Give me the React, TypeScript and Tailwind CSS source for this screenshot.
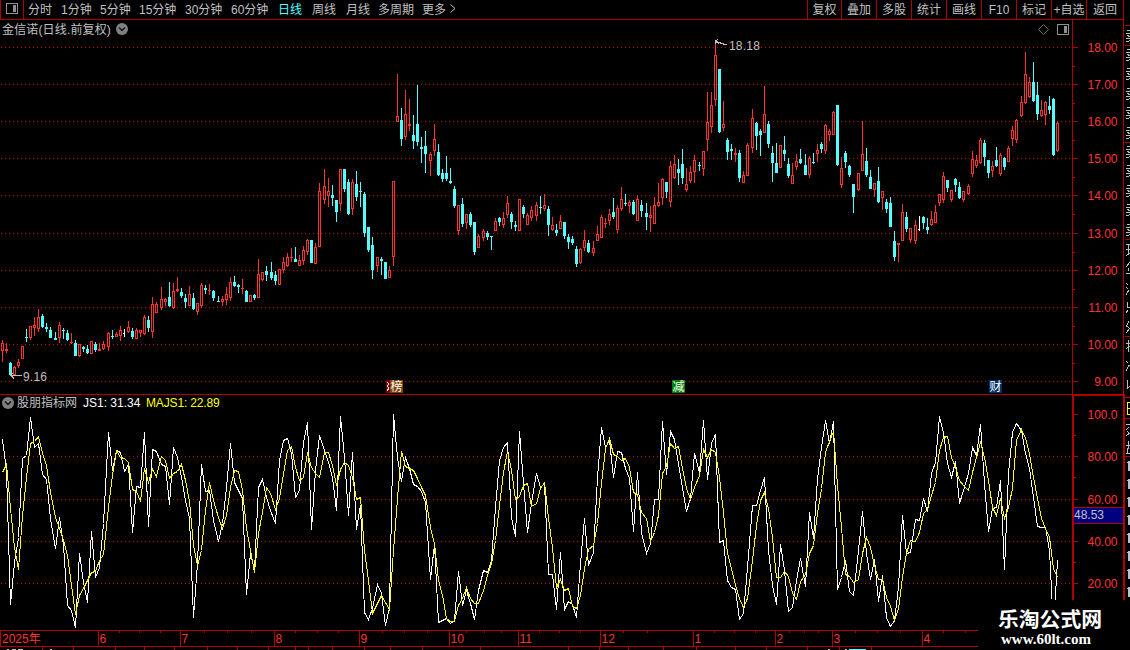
import React from "react";
import clsx from "clsx";

type Bar = [number, number, number, number, number, string];

const UP = "#ff3232";
const DOWN = "#54ffff";
const FLAT = "#ffffff";
const LINE = "#b00000";

// x high low bodyTop bodyBottom kind (r = up, c = down, w = flat)
const BARS_RAW = `
2 340 362 343 351 r;6 343 353 349 351 r;10 362 376 363 375 c;14 366 376 367 375 r;18 359 368 362 366 r;22 346 359 346 359 r;
26 329 342 337 338 c;30 326 340 326 338 r;34 317 336 325 328 r;38 309 332 317 329 r;42 314 328 316 327 c;46 323 332 327 329 c;
50 327 338 330 338 c;55 332 340 338 340 c;59 322 343 325 338 r;63 328 339 330 331 c;67 330 341 333 340 c;71 333 344 342 343 r;
75 340 356 343 356 c;79 344 357 344 356 r;83 346 352 347 349 c;87 345 354 349 353 c;91 341 354 341 354 r;95 342 352 344 350 c;
99 343 351 349 351 r;103 341 350 344 349 r;108 332 351 333 347 r;112 330 339 336 337 c;116 332 337 334 337 r;120 326 341 330 336 r;
124 329 337 333 334 w;128 321 333 327 332 r;132 328 339 331 337 c;136 328 339 330 339 r;140 330 337 330 333 r;144 315 335 317 334 r;
148 316 332 320 328 c;152 297 338 304 332 r;156 302 313 304 313 r;161 287 310 299 308 r;165 298 306 299 302 r;169 282 307 297 306 c;
173 283 309 291 308 r;177 277 292 289 291 r;181 288 298 292 296 c;185 294 308 298 302 c;189 286 306 294 306 r;193 293 310 298 309 c;
197 303 315 303 312 r;201 283 308 285 306 r;205 285 294 288 290 c;209 284 295 290 291 r;213 290 301 291 298 c;218 296 302 301 302 c;
222 296 306 299 302 r;226 287 305 294 300 r;230 277 301 282 298 r;234 276 287 282 286 c;238 284 293 285 287 c;242 279 294 288 289 r;
246 290 302 291 302 c;250 295 302 295 302 r;254 294 300 295 298 c;258 259 298 274 298 r;262 272 281 272 280 r;266 266 281 271 275 c;
271 262 280 272 278 c;275 271 285 275 281 c;279 269 285 269 285 r;283 257 273 262 270 r;287 253 267 257 266 r;291 248 262 257 258 r;
295 247 262 259 262 c;299 255 266 260 266 r;303 246 265 250 261 r;307 239 255 240 252 r;311 240 263 240 263 c;315 243 264 247 264 r;
319 183 247 191 247 r;324 169 204 186 200 r;328 178 207 191 196 r;332 185 206 195 198 c;336 200 222 200 212 c;340 169 211 169 204 r;
344 169 192 169 189 c;348 179 215 182 214 c;352 179 215 182 209 r;356 171 201 184 197 c;360 182 207 191 192 c;364 192 237 194 233 c;
368 227 252 227 250 c;372 237 279 245 270 c;377 257 272 257 266 r;381 257 275 259 261 c;385 262 279 262 279 c;389 266 278 270 278 r;
393 181 266 181 257 r;397 74 122 116 122 r;401 108 146 120 139 c;405 90 140 114 137 r;409 99 131 124 126 r;413 115 149 135 141 c;
417 85 146 124 142 c;421 137 163 147 149 c;425 131 173 146 154 c;430 152 176 154 161 r;434 124 156 139 151 r;438 144 176 152 175 c;
442 169 182 173 179 c;446 156 181 173 179 c;450 168 184 181 183 c;454 186 208 189 206 c;458 205 235 205 231 r;462 198 227 204 224 c;
466 214 229 214 223 r;470 212 227 214 225 c;474 222 255 222 252 c;478 234 248 236 248 r;483 229 241 231 238 r;487 231 240 233 237 c;
491 236 250 236 237 c;495 218 231 221 231 r;499 217 226 218 222 c;503 212 228 218 225 r;507 196 218 203 215 r;511 212 229 214 222 c;
515 221 231 225 227 c;519 199 231 199 231 r;523 205 218 207 214 c;527 213 225 215 225 r;531 206 221 210 218 r;536 202 221 205 216 r;
540 196 214 207 208 c;544 194 211 205 209 r;548 206 236 209 225 c;552 217 231 225 230 r;556 224 236 230 233 c;560 215 229 221 229 r;
564 222 239 222 236 c;568 234 249 237 242 c;572 236 245 239 243 c;576 246 267 249 264 c;580 248 264 249 263 r;584 230 251 240 248 r;
588 240 253 243 252 c;593 241 256 248 253 r;597 226 241 234 241 r;601 215 238 217 238 r;605 218 228 223 224 r;609 209 225 214 221 r;
613 198 219 212 217 c;617 205 233 208 230 r;621 187 211 199 209 r;625 194 206 203 204 c;629 200 213 202 206 r;633 200 215 202 214 c;
637 195 221 199 221 r;641 200 217 205 211 c;646 203 230 213 217 c;650 206 232 215 218 r;654 197 224 205 224 r;658 183 207 202 206 r;
662 178 205 179 198 r;666 182 198 182 192 c;670 161 207 166 202 r;674 155 179 164 178 r;678 159 185 169 173 c;682 149 184 164 178 c;
686 168 192 184 190 r;690 166 183 172 181 r;694 155 183 160 172 r;699 162 171 165 166 c;703 151 176 151 169 r;707 92 151 122 140 r;
711 92 133 105 127 r;715 40 106 55 100 r;719 69 133 69 132 c;723 101 131 124 128 r;727 138 160 140 152 c;731 144 160 149 151 c;
735 148 162 153 155 r;739 150 182 153 178 c;743 171 183 175 183 r;747 143 176 145 176 r;752 109 153 118 148 r;756 122 150 123 136 c;
760 129 156 131 135 c;764 86 133 114 133 r;768 121 148 124 144 c;772 146 182 153 163 c;776 143 173 163 173 c;780 145 168 145 168 r;
784 136 161 150 154 c;788 158 178 164 176 c;792 163 184 175 184 r;796 154 170 161 167 r;800 149 164 159 163 c;805 154 175 165 175 c;
809 156 178 158 175 r;813 153 164 162 163 c;817 144 162 150 154 r;821 142 153 144 149 c;825 124 154 125 151 r;829 129 141 131 135 r;
833 111 135 112 135 r;837 105 166 105 165 c;841 157 188 168 185 r;845 151 168 153 162 c;849 165 177 166 175 c;853 184 213 184 197 c;
858 173 191 173 190 r;862 121 171 154 171 r;866 148 177 161 175 c;870 170 189 177 189 c;874 183 197 183 190 r;878 167 203 181 202 c;
882 191 210 191 198 r;886 199 213 202 209 c;890 197 227 203 227 c;894 231 261 241 257 c;898 243 262 243 245 r;902 204 241 212 241 r;
906 212 232 217 229 c;910 228 243 228 240 r;915 220 244 225 241 r;919 216 231 229 230 w;923 216 229 217 223 c;927 218 234 227 230 c;
931 211 226 219 225 r;935 205 223 212 223 r;939 194 206 194 203 r;943 172 203 176 200 r;947 180 192 180 188 c;951 190 202 190 200 r;
955 178 192 179 185 c;959 182 199 187 198 c;963 191 202 191 200 r;968 184 195 186 194 r;972 151 177 159 174 r;976 155 168 160 166 r;
980 138 164 140 163 r;984 140 166 143 157 c;988 160 178 160 173 c;992 161 177 166 171 r;996 147 167 160 166 c;1000 153 176 155 174 r;
1004 157 170 158 167 c;1008 146 162 148 162 r;1012 126 146 130 139 r;1016 119 143 120 140 r;1021 96 117 102 116 r;1025 52 104 74 103 r;
1029 77 98 82 97 r;1033 62 102 82 101 c;1037 82 120 95 114 c;1041 100 117 110 116 r;1045 101 125 102 115 r;1049 96 114 106 110 c;
1053 98 156 99 155 c;1057 121 152 123 151 r`;

const BARS: Bar[] = BARS_RAW.trim()
  .split(";")
  .map((row) => {
    const p = row.trim().split(" ");
    return [+p[0], +p[1], +p[2], +p[3], +p[4], p[5]];
  });

const JS1 =
  "2,439 6,470 10,604 14,562 18,537 22,458 26,455 30,417 34,447 38,443 42,474 46,479 50,518 55,548 59,517 63,545 67,605 71,610 75,627 79,553 83,582 87,602 91,531 95,577 99,567 103,523 108,432 112,470 116,450 120,452 124,471 128,464 132,532 136,486 140,487 144,432 148,526 152,449 156,451 161,464 165,466 169,504 173,447 177,457 181,477 185,500 189,518 193,617 197,563 201,464 205,491 209,490 213,520 218,541 222,523 226,487 230,443 234,482 238,490 242,498 246,594 250,553 254,570 258,487 262,479 266,497 270,510 275,523 279,460 283,440 287,438 " +
  "291,453 295,497 299,490 303,442 307,422 311,529 315,470 319,435 324,450 328,462 332,477 336,510 340,416 344,457 348,515 352,452 356,529 360,505 364,612 368,619 372,608 377,584 381,593 385,625 389,607 393,414 397,457 401,481 405,457 409,468 413,484 417,486 421,491 425,502 430,579 434,544 438,622 442,620 446,618 450,623 454,620 458,571 462,605 466,590 470,603 474,619 478,590 483,570 487,572 491,560 495,507 499,460 503,447 507,442 511,517 515,536 519,431 523,483 527,532 531,503 536,473 540,487 544,483 548,574 552,574 556,609 " +
  "560,552 564,609 568,601 572,604 576,617 580,563 584,518 588,565 593,552 597,477 601,427 605,447 609,440 613,477 617,451 621,452 625,468 629,478 633,531 637,472 641,532 646,553 650,543 654,499 658,499 662,421 666,474 670,431 674,439 678,463 682,487 686,511 690,498 694,453 699,472 703,420 707,479 711,443 715,434 719,542 723,540 727,580 731,587 735,589 739,619 743,613 747,567 752,505 756,505 760,490 764,477 768,550 772,585 776,604 780,544 784,570 788,611 792,607 796,580 800,558 805,586 809,512 813,538 817,478 821,447 825,420 " +
  "829,443 833,421 837,589 841,577 845,560 849,591 853,595 858,550 862,511 866,553 870,579 874,559 878,601 882,575 886,617 890,626 894,620 898,587 902,515 906,553 910,552 915,519 919,520 923,498 927,511 931,473 935,462 939,416 943,432 947,463 951,477 955,461 959,503 963,490 968,473 972,447 976,455 980,424 984,483 988,531 992,508 996,507 1000,480 1004,569 1008,473 1012,432 1016,423 1021,430 1025,453 1029,468 1033,497 1037,526 1041,527 1045,527 1049,550 1053,628 1057,560";

const MAJS1 =
  "2,472 6,464 10,508 14,547 18,569 22,515 26,477 30,443 34,441 38,436 42,453 46,465 50,492 55,517 59,528 63,540 67,555 71,585 75,614 79,595 83,588 87,580 91,572 95,571 99,560 103,554 108,507 112,475 116,450 120,457 124,458 128,462 132,489 136,491 140,501 144,468 148,482 152,469 156,476 161,456 165,460 169,478 173,473 177,471 181,464 185,480 189,501 193,545 197,565 201,550 205,510 209,482 213,500 218,517 222,528 226,515 230,487 234,470 238,471 242,490 246,528 250,550 254,572 258,533 262,512 266,487 270,493 275,509 279,498 283,473 287,450 " +
  "291,446 295,467 299,480 303,477 307,452 311,467 315,473 319,477 324,452 328,452 332,465 336,485 340,469 344,462 348,465 352,477 356,499 360,497 364,550 368,580 372,613 377,603 381,595 385,602 389,609 393,550 397,498 401,451 405,466 409,468 413,470 417,478 421,487 425,495 430,527 434,543 438,580 442,595 446,618 450,621 454,621 458,605 462,598 466,587 470,598 474,603 478,603 483,590 487,575 491,563 495,540 499,505 503,472 507,451 511,470 515,499 519,496 523,485 527,483 531,506 536,503 540,488 544,482 548,518 552,547 556,587 " +
  "560,579 564,590 568,588 572,606 576,608 580,595 584,568 588,549 593,545 597,523 601,483 605,448 609,438 613,454 617,456 621,460 625,458 629,467 633,492 637,494 641,512 646,518 650,541 654,532 658,515 662,473 666,466 670,443 674,448 678,446 682,468 686,488 690,499 694,487 699,475 703,449 707,457 711,449 715,452 719,477 723,512 727,553 731,568 735,585 739,598 743,607 747,598 752,560 756,525 760,500 764,492 768,508 772,537 776,577 780,577 784,571 788,576 792,593 796,599 800,581 805,574 809,553 813,545 817,513 821,488 825,452 " +
  "829,441 833,431 837,485 841,527 845,574 849,576 853,582 858,579 862,553 866,537 870,547 874,565 878,579 882,579 886,597 890,606 894,620 898,608 902,577 906,553 910,540 915,541 919,532 923,513 927,509 931,495 935,482 939,450 943,437 947,436 951,457 955,467 959,480 963,485 968,490 972,472 976,457 980,442 984,457 988,480 992,507 996,515 1000,498 1004,518 1008,507 1012,488 1016,440 1021,429 1025,438 1029,453 1033,477 1037,498 1041,518 1045,528 1049,537 1053,568 1057,577";

const PERIODS = [
  { label: "分时", width: "w-[33px]" },
  { label: "1分钟", width: "w-[39px]" },
  { label: "5分钟", width: "w-[39px]" },
  { label: "15分钟", width: "w-[46px]" },
  { label: "30分钟", width: "w-[46px]" },
  { label: "60分钟", width: "w-[47px]" },
  { label: "日线", width: "w-[34px]", active: true },
  { label: "周线", width: "w-[34px]" },
  { label: "月线", width: "w-[32px]" },
  { label: "多周期", width: "w-[44px]" },
  { label: "更多", width: "w-[28px]" },
];

const TOOLS = [
  { label: "复权", width: "w-[34px]" },
  { label: "叠加", width: "w-[35px]" },
  { label: "多股", width: "w-[35px]" },
  { label: "统计", width: "w-[35px]" },
  { label: "画线", width: "w-[35px]" },
  { label: "F10", width: "w-[35px]" },
  { label: "标记", width: "w-[35px]" },
  { label: "+自选", width: "w-[35px]" },
  { label: "返回", width: "w-[37px]" },
];

const PRICES = [
  { y: 47, label: "18.00" },
  { y: 84, label: "17.00" },
  { y: 121, label: "16.00" },
  { y: 158, label: "15.00" },
  { y: 195, label: "14.00" },
  { y: 233, label: "13.00" },
  { y: 270, label: "12.00" },
  { y: 307, label: "11.00" },
  { y: 344, label: "10.00" },
  { y: 381, label: "9.00" },
];

const LEVELS = [
  { y: 414, label: "100.0" },
  { y: 456, label: "80.00" },
  { y: 499, label: "60.00" },
  { y: 541, label: "40.00" },
  { y: 583, label: "20.00" },
];

const MONTHS = [
  { x: 98, label: "6" },
  { x: 180, label: "7" },
  { x: 274, label: "8" },
  { x: 359, label: "9" },
  { x: 449, label: "10" },
  { x: 518, label: "11" },
  { x: 600, label: "12" },
  { x: 693, label: "1" },
  { x: 775, label: "2" },
  { x: 832, label: "3" },
  { x: 922, label: "4" },
];

const WEEK_TICKS = [
  119, 139, 160, 204, 227, 251, 295, 317, 338, 382, 404, 427, 466, 484, 501,
  539, 559, 580, 623, 647, 714, 734, 755, 789, 804, 818, 855, 877, 900, 943,
  965,
];

const FOOT_TICKS = [
  42, 73, 115, 144, 174, 207, 237, 268, 295, 308, 332, 364, 390, 422, 480, 568,
  599, 628, 663, 696, 735, 766, 807, 839, 871,
];

// left edges of the quote rows, as far as the strip shows them
const QUOTE_ROWS = [28, 47, 66, 86, 105, 125, 144, 163, 183, 202, 222];
const QUOTE_RULES = [25, 45, 142, 239, 336, 397, 418, 456];

const Candle = ({ bar }: { bar: Bar }) => {
  const [x, high, low, top, bottom, kind] = bar;
  const color = kind === "r" ? UP : kind === "c" ? DOWN : FLAT;
  const hollow = kind === "r" && bottom - top > 2;
  return (
    <g fill={color}>
      {kind === "w" && <rect x={x} y={high} width={1} height={low - high} />}
      {top > high && <rect x={x} y={high} width={1} height={top - high} />}
      {low > bottom && <rect x={x} y={bottom} width={1} height={low - bottom} />}
      {hollow ? (
        <path
          fillRule="evenodd"
          d={`M${x - 1} ${top}h3V${bottom}h-3ZM${x} ${top + 1}V${bottom - 1}h1V${top + 1}Z`}
        />
      ) : (
        <rect x={x - 1} y={top} width={kind === "w" ? 2 : 3} height={bottom - top} />
      )}
    </g>
  );
};

const GridLine = ({ y }: { y: number }) => (
  <line
    x1={1}
    x2={1070}
    y1={y + 0.5}
    y2={y + 0.5}
    stroke={LINE}
    strokeDasharray="1 3"
  />
);

const PanelIcon = () => (
  <svg width="12" height="11" viewBox="0 0 12 11" shapeRendering="crispEdges">
    <rect x="0.5" y="0.5" width="11" height="10" rx="1" fill="none" stroke="#909090" />
    <rect x="7" y="2" width="3" height="7" fill="#909090" />
  </svg>
);

const ChevronBadge = () => (
  <svg width="12" height="12" viewBox="0 0 12 12">
    <circle cx="6" cy="6" r="6" fill="#808080" />
    <path d="M3 4.5 6 7.5 9 4.5" fill="none" stroke="#111" strokeWidth="1.4" />
  </svg>
);

const Toolbar = () => (
  <header className="flex h-5 w-[1124px] shrink-0 border-b border-[#b00000] text-[#c0c0c0]">
    <div className="flex w-6 items-center justify-center border-x border-[#b00000] pb-[2px]">
      <PanelIcon />
    </div>
    <nav className="flex flex-1 pl-1 pt-px leading-[18px]">
      {PERIODS.map((p) => (
        <span
          key={p.label}
          className={clsx("shrink-0 whitespace-nowrap", p.width, p.active && "text-[#54ffff]")}
        >
          {p.label}
        </span>
      ))}
      <svg width="6" height="9" viewBox="0 0 6 9" className="mt-[3px]">
        <path d="M0.5 0.5 5 4.5 0.5 8.5" fill="none" stroke="#c0c0c0" />
      </svg>
    </nav>
    <div className="flex border-r border-[#b00000] leading-[18px]">
      {TOOLS.map((t) => (
        <span
          key={t.label}
          className={clsx(
            "shrink-0 whitespace-nowrap border-l border-[#b00000] pt-px text-center",
            t.width
          )}
        >
          {t.label}
        </span>
      ))}
    </div>
  </header>
);

const PricePanel = () => (
  <section className="relative h-[374px] w-[1123px]">
    <svg
      width="1123"
      height="374"
      viewBox="0 20 1123 374"
      shapeRendering="crispEdges"
      className="block"
    >
      {PRICES.map((p) => (
        <g key={p.label}>
          <GridLine y={p.y} />
          <rect x={1073} y={p.y} width={5} height={1} fill={LINE} />
          {p.y < 381 && <rect x={1073} y={p.y + 19} width={2} height={1} fill={LINE} />}
          <text x={1117.5} y={p.y + 5} textAnchor="end" fontSize="12" fill={UP}>
            {p.label}
          </text>
        </g>
      ))}
      <rect x={1072} y={20} width={1} height={374} fill={LINE} />
      {BARS.map((bar) => (
        <Candle key={bar[0]} bar={bar} />
      ))}
      <g fill="none" stroke="#c0c0c0">
        <path d="M715.5 44V40.5L718 39.5M716 41.5 726.5 45M716 41.500 719 44" />
        <path d="M10 375.500H22M11 375.500 14 378.500M11 375.500 13 373" />
      </g>
      <text x={729} y={50} fontSize="12" letterSpacing="0.2" fill="#c0c0c0">
        18.18
      </text>
      <text x={23} y={381} fontSize="12" letterSpacing="0.2" fill="#c0c0c0">
        9.16
      </text>
      <rect x={386} y={380} width={5} height={13} fill="#800000" />
      <rect x={390} y={380} width={13} height={13} fill="#804000" />
      <path d="M387 382l2 2-2 2 2 2-2 3" stroke="#fff" fill="none" />
      <rect x={672} y={380} width={13} height={13} fill="#008000" />
      <rect x={989} y={380} width={13} height={13} fill="#003068" />
      <g fontSize="12" fill="#fff" textAnchor="middle">
        <text x={396.5} y={391}>榜</text>
        <text x={678.5} y={391}>减</text>
        <text x={995.5} y={391}>财</text>
      </g>
    </svg>
    <div className="absolute left-[2px] top-0 flex h-[18px] items-center text-[#c0c0c0]">
      <span className="w-[114px] whitespace-nowrap pt-px leading-[18px] tracking-[0.15px]">
        金信诺(日线.前复权)
      </span>
      <ChevronBadge />
    </div>
    <div className="absolute right-[54px] top-1 flex items-center gap-2">
      <svg width="11" height="11" viewBox="0 0 11 11">
        <path d="M5.500 0.500 10.500 5.500 5.500 10.500 0.500 5.500Z" fill="none" stroke="#707070" />
      </svg>
      <PanelIcon />
    </div>
  </section>
);

const IndicatorPanel = () => (
  <section className="relative h-[236px] w-[1125px]">
    <svg
      width="1125"
      height="236"
      viewBox="0 394 1125 236"
      shapeRendering="crispEdges"
      className="block"
    >
      {LEVELS.map((l, i) => (
        <g key={l.label}>
          {i > 0 && <GridLine y={l.y} />}
          <rect x={1074} y={l.y} width={4} height={1} fill={LINE} />
          {i < 4 && <rect x={1074} y={l.y + 21} width={2} height={1} fill={LINE} />}
          <text x={1117.5} y={l.y + 5} textAnchor="end" fontSize="12" fill={UP}>
            {l.label}
          </text>
        </g>
      ))}
      <rect x={0} y={394} width={1123} height={1} fill={LINE} />
      <rect x={1072} y={394} width={53} height={2} fill={LINE} />
      <rect x={1072} y={394} width={2} height={236} fill={LINE} />
      <rect x={1123} y={394} width={2} height={236} fill={LINE} />
      <g fill="none" strokeWidth="1" transform="translate(0.5 0.5)">
        <polyline points={JS1} stroke="#ffffff" />
        <polyline points={MAJS1} stroke="#ffff00" />
      </g>
      <rect x={1074} y={507} width={49} height={17} fill={LINE} />
      <rect x={1074} y={508} width={49} height={15} fill="#000080" />
      <text x={1074} y={519} fontSize="12" fill="#c0c0c0">
        48.53
      </text>
    </svg>
    <div className="absolute left-[2px] top-0 flex h-[18px] items-center whitespace-nowrap text-[#c0c0c0]">
      <ChevronBadge />
      <span className="ml-[3px] w-[66px]">股朋指标网</span>
      <span className="w-[63px] text-white">JS1: 31.34</span>
      <span className="tracking-[-0.15px] text-[#ffff00]">MAJS1: 22.89</span>
    </div>
  </section>
);

const TimeAxis = () => (
  <svg
    width="1123"
    height="20"
    viewBox="0 630 1123 20"
    shapeRendering="crispEdges"
    className="block"
  >
    <g fill={LINE}>
      <rect x={0} y={630} width={1123} height={1} />
      <rect x={0} y={646} width={1123} height={1} />
      <rect x={0} y={630} width={1} height={17} />
      {WEEK_TICKS.map((x) => (
        <rect key={x} x={x} y={631} width={1} height={2} />
      ))}
      {MONTHS.map((m) => (
        <rect key={m.x} x={m.x} y={631} width={1} height={15} />
      ))}
      {FOOT_TICKS.map((x) => (
        <rect key={x} x={x} y={647} width={1} height={3} />
      ))}
    </g>
    <g fontSize="12" fill={UP}>
      <text x={2} y={643}>2025年</text>
      {MONTHS.map((m) => (
        <text key={m.x} x={m.x + 1.5} y={643}>
          {m.label}
        </text>
      ))}
    </g>
    <g fill="#c0c0c0">
      <rect x={7} y={649} width={2} height={1} />
      <rect x={12} y={649} width={4} height={1} />
      <rect x={18} y={649} width={5} height={1} />
      <rect x={50} y={649} width={2} height={1} />
      <rect x={828} y={649} width={2} height={1} />
      <rect x={845} y={649} width={2} height={1} />
    </g>
    <rect x={849} y={649} width={17} height={1} fill={DOWN} />
  </svg>
);

const QuoteStrip = () => (
  <svg
    width="5"
    height="630"
    viewBox="1125 20 5 630"
    shapeRendering="crispEdges"
    className="block"
  >
    {QUOTE_RULES.map((y) => (
      <rect key={y} x={1125} y={y} width={5} height={1} fill={LINE} />
    ))}
    <g fill="none" stroke="#c0c0c0">
      {QUOTE_ROWS.map((y) => (
        <path
          key={y}
          d={`M1127 ${y + 2.5}h3M1126 ${y + 5.5}h4M1127 ${y + 7.5}h1v1h2M1126 ${y + 10.5}h4M1126 ${y + 13.5}h2l2 -1`}
        />
      ))}
      <path d="M1126 244.500H1130M1128.500 244V255M1126 249.500H1130M1126 255.500 1130 253" />
      <path d="M1130 262 1126 267M1128.500 268V271M1126 273.500H1130" />
      <path d="M1126 283 1128 285M1126 287 1128 289M1126 295 1129 290" />
      <path d="M1127 302V307M1127 307.500H1130M1126 313 1128 310" />
      <path d="M1129 321 1126 327M1127 326 1130 329M1126 333 1130 328" />
      <path d="M1126 343.500H1130M1128.500 340V352M1126 348.500 1130 346" />
      <path d="M1126 361 1128 363M1126 371 1129 365M1128 365.500H1130" />
      <path d="M1127.500 380V388M1127 388.500 1130 386" />
      <path d="M1126 424.500H1130M1129 427 1126 430M1127 431 1130 434M1126 436 1130 433" />
      <path d="M1128.500 441V449M1126 445.500H1130M1127.500 448V453M1126 453.500H1130" />
    </g>
    <path
      d="M1130 402.500H1127.500V414.500H1130M1128 408.500H1130"
      fill="none"
      stroke="#ffff00"
    />
    {[461, 479, 497, 515, 533, 551, 569, 587].map((y) => (
      <g key={y} fill="#c0c0c0">
        <rect x={1128} y={y} width={2} height={10} />
        <rect x={1127} y={y + 1} width={1} height={1} />
      </g>
    ))}
  </svg>
);

const App = () => {
  return (
    <div className="relative h-[650px] w-[1130px] overflow-hidden bg-black font-['Liberation_Sans','Noto_Sans_CJK_SC',sans-serif] text-[12px]">
      <Toolbar />
      <div className="flex">
        <main className="w-[1125px] shrink-0">
          <div className="w-[1124px] border-r border-[#b00000]">
            <PricePanel />
          </div>
          <IndicatorPanel />
          <TimeAxis />
        </main>
        <QuoteStrip />
      </div>
      <div className="absolute bottom-0 right-0 flex h-[50px] w-[152px] flex-col items-start bg-black pl-5 pt-[7px] text-white">
        <strong className="whitespace-nowrap text-[20.8px] leading-[26px]">乐淘公式网</strong>
        <strong className="pl-[3px] font-['Liberation_Serif',serif] text-[15px] leading-[13px]">
          www.60lt.com
        </strong>
      </div>
    </div>
  );
};

export default App;
